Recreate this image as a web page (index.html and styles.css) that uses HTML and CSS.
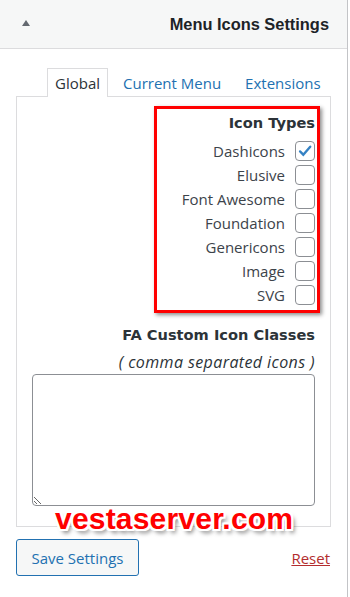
FILE: index.html
```html
<!DOCTYPE html>
<html lang="en">
<head>
  <meta charset="UTF-8">
  <meta name="viewport" content="width=device-width, initial-scale=1.0">
  <title>Menu Icons Settings</title>
  <link rel="stylesheet" href="styles.css">
</head>
<body>

<div class="postbox">
  <div class="postbox-header">
    <span class="toggle-arrow"></span>
    <h2>Menu Icons Settings</h2>
  </div>

  <div class="inside">
    <ul class="tabs">
      <li class="tab active">Global</li>
      <li class="tab">Current Menu</li>
      <li class="tab">Extensions</li>
    </ul>

    <div class="panel">
      <div class="icon-types">
        <h3>Icon Types</h3>
        <label class="check-row">Dashicons <span class="checkbox checked"><svg viewBox="0 0 20 20" width="18" height="18"><path d="M4.5 10.5l3.6 3.6L15.8 5.2" fill="none" stroke="#3582c4" stroke-width="2.6" stroke-linecap="round"/></svg></span></label>
        <label class="check-row">Elusive <span class="checkbox"></span></label>
        <label class="check-row">Font Awesome <span class="checkbox"></span></label>
        <label class="check-row">Foundation <span class="checkbox"></span></label>
        <label class="check-row">Genericons <span class="checkbox"></span></label>
        <label class="check-row">Image <span class="checkbox"></span></label>
        <label class="check-row">SVG <span class="checkbox"></span></label>
      </div>

      <h3 class="fa-title">FA Custom Icon Classes</h3>
      <p class="fa-hint">( comma separated icons )</p>
      <textarea class="fa-classes"></textarea>
    </div>

    <div class="actions">
      <button type="button" class="btn-save">Save Settings</button>
      <a href="#" class="reset">Reset</a>
    </div>

    <div class="watermark">vestaserver.com</div>
  </div>
</div>

</body>
</html>
```

FILE: styles.css
```css
body { margin: 0; background: #fff; font-family: 'Open Sans', sans-serif; color: #3c434a; }
.postbox { width: 347px; border-right: 1px solid #c3c4c7; min-height: 597px; position: relative; }
.postbox-header { height: 48px; background: #f6f7f7; border-bottom: 1px solid #dcdcde; display: flex; align-items: center; padding: 0 18px 0 22px; }
.postbox-header h2 { margin: 0 0 0 auto; font: bold 16.4px 'Liberation Sans', sans-serif; color: #1d2327; }
.toggle-arrow { width: 0; height: 0; border-left: 4px solid transparent; border-right: 4px solid transparent; border-bottom: 6px solid #646970; margin-top: -3px; }

.inside { padding: 19px 16px 0; }
.tabs { list-style: none; margin: 0; padding: 0 0 0 31px; display: flex; height: 29px; position: relative; z-index: 1; }
.tab { font-size: 15px; line-height: 28px; padding: 0 8px; color: #2271b1; margin-right: 6px; border: 1px solid transparent; border-bottom: none; white-space: nowrap; }
.tab.active { color: #2c3338; border-color: #dcdcde; background: #fff; height: 29px; box-sizing: border-box; padding: 0 7px; }

.panel { border: 1px solid #dcdcde; margin-top: -1px; padding: 9px 15px 20px; text-align: right; }

.icon-types { width: 158px; margin-left: auto; margin-right: -5px; border: 3px solid #f00; box-shadow: 2px 2px 4px rgba(0,0,0,0.45); padding: 4px 2px 0 0; height: 197px; }
.icon-types h3 { margin: 0 0 6px; font: bold 14.6px/20px 'DejaVu Sans', sans-serif; color: #2c3338; }
.check-row { display: flex; justify-content: flex-end; align-items: center; height: 24px; font-size: 15px; color: #3c434a; }
.checkbox { width: 18px; height: 18px; border: 1px solid #8c8f94; border-radius: 4px; margin-left: 10px; display: flex; align-items: center; justify-content: center; }

.fa-title { margin: 10px 0 0; font: bold 14.6px/24px 'DejaVu Sans', sans-serif; color: #2c3338; }
.fa-hint { margin: 3px 0 0; font-style: italic; font-size: 16px; letter-spacing: 0.4px; line-height: 24px; color: #2c3338; }
.fa-classes { display: block; width: 100%; height: 132px; box-sizing: border-box; border: 1px solid #8c8f94; border-radius: 4px; direction: rtl; margin: 0; }

.actions { display: flex; justify-content: space-between; align-items: center; margin-top: 12px; }
.btn-save { font: 15px 'Open Sans', sans-serif; color: #2271b1; background: #f6f7f7; border: 1px solid #2271b1; border-radius: 3px; width: 123px; height: 37px; padding: 0; }
.reset { color: #b32d2e; font-size: 15px; text-decoration: underline; margin-right: 1px; }

.watermark { position: absolute; left: 55px; top: 502px; font: bold 30px 'Liberation Sans', sans-serif; color: #f00; letter-spacing: 0.2px;
  text-shadow: -2px 0 #fff, 2px 0 #fff, 0 -2px #fff, 0 2px #fff, -2px -2px #fff, 2px 2px #fff, -2px 2px #fff, 2px -2px #fff, 3px 4px 4px rgba(0,0,0,0.5); }
```
